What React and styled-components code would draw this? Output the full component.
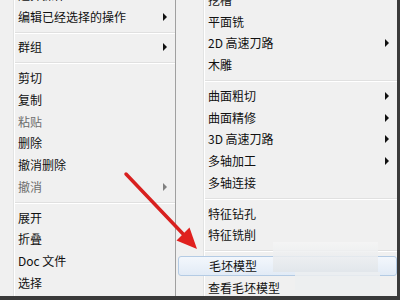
import styled, { createGlobalStyle } from "styled-components";

const GlobalStyle = createGlobalStyle`
  body {
    margin: 0;
    background: #3a3a3a;
    font-family: "Noto Sans CJK SC", "Noto Sans", sans-serif;
  }
`;

const leftItems = [
  { label: "选择操作", sub: true },
  { label: "编辑已经选择的操作", sub: true },
  { sep: true },
  { label: "群组", sub: true },
  { sep: true },
  { label: "剪切" },
  { label: "复制" },
  { label: "粘贴", disabled: true },
  { label: "删除" },
  { label: "撤消删除" },
  { label: "撤消", disabled: true, sub: true },
  { sep: true },
  { label: "展开" },
  { label: "折叠" },
  { label: "Doc 文件" },
  { label: "选择" },
];

const rightItems = [
  { label: "挖槽" },
  { label: "平面铣" },
  { label: "2D 高速刀路", sub: true },
  { label: "木雕" },
  { sep: true },
  { label: "曲面粗切", sub: true },
  { label: "曲面精修", sub: true },
  { label: "3D 高速刀路", sub: true },
  { label: "多轴加工", sub: true },
  { label: "多轴连接" },
  { sep: true },
  { label: "特征钻孔" },
  { label: "特征铣削" },
  { sep: true },
  { label: "毛坯模型", active: true },
  { label: "查看毛坯模型" },
];

function MenuList({ items }) {
  return items.map((it, i) =>
    it.sep ? (
      <Separator key={i} />
    ) : (
      <Item key={i} $disabled={it.disabled} $active={it.active}>
        <Label>{it.label}</Label>
        {it.sub && <SubArrow $disabled={it.disabled} />}
      </Item>
    )
  );
}

const App = () => {
  return (
    <>
      <GlobalStyle />
      <Screen>
        <LeftMenu>
          <MenuBody $offset={-16}>
            <MenuList items={leftItems} />
          </MenuBody>
        </LeftMenu>
        <RightMenu>
          <MenuBody $offset={-11}>
            <MenuList items={rightItems} />
          </MenuBody>
        </RightMenu>
        <BlurPatch $x={273} $y={242} $w={105} $h={30} $bg="linear-gradient(#f5f5f5, #e1e5e9)" />
        <BlurPatch $x={295} $y={272} $w={85} $h={18} $bg="#eceef0" />
        <Pointer width="400" height="300" viewBox="0 0 400 300">
          <line x1="126" y1="174" x2="185" y2="236" stroke="#d8201f" strokeWidth="3.5" strokeLinecap="round" />
          <polygon points="197,249 176.5,240.5 189.5,227.5" fill="#e0201e" />
        </Pointer>
      </Screen>
    </>
  );
};

export default App;

const Screen = styled.div`
  position: relative;
  display: flex;
  align-items: flex-start;
  width: 400px;
  height: 300px;
  overflow: hidden;
  background: #3a3a3a;
`;

// 왼쪽 27px 아이콘 칸 + 세로줄
const Menu = styled.div`
  height: 296px;
  overflow: hidden;
  background:
    linear-gradient(to right, transparent 27px, #e2e3e3 27px, #e2e3e3 28px, #ffffff 28px, #ffffff 29px, transparent 29px),
    #f0f0f0;
`;

const LeftMenu = styled(Menu)`
  flex: none;
  width: 189px;
  margin-left: -14px;
  border-right: 1px solid #a0a0a0;
`;

const RightMenu = styled(Menu)`
  flex: none;
  width: 221px;
`;

const MenuBody = styled.div`
  display: flex;
  flex-direction: column;
  margin-top: ${(p) => p.$offset}px;
`;

const Item = styled.div`
  display: flex;
  align-items: center;
  box-sizing: border-box;
  height: 21.75px;
  padding-left: 32px;
  padding-right: 8px;
  font-size: 12px;
  line-height: 14px;
  color: ${(p) => (p.$disabled ? "#6d6d6d" : "#111")};
  ${(p) =>
    p.$active &&
    `
    margin: 1px 0 1px 2px;
    height: 19.75px;
    padding-left: 30px;
    border: 1px solid #b4cbe4;
    border-radius: 3px;
    background: linear-gradient(#f3f7fc, #e2ebf6);
  `}
`;

const Label = styled.span`
  white-space: nowrap;
`;

const SubArrow = styled.span`
  margin-left: auto;
  width: 0;
  height: 0;
  border-top: 4px solid transparent;
  border-bottom: 4px solid transparent;
  border-left: 4px solid ${(p) => (p.$disabled ? "#808080" : "#111")};
`;

const Separator = styled.div`
  height: 9px;
  margin-left: 29px;
  background: linear-gradient(transparent 4px, #e0e0e0 4px, #e0e0e0 5px, #ffffff 5px, #ffffff 6px, transparent 6px);
`;

const BlurPatch = styled.div`
  position: absolute;
  left: ${(p) => p.$x}px;
  top: ${(p) => p.$y}px;
  width: ${(p) => p.$w}px;
  height: ${(p) => p.$h}px;
  background: ${(p) => p.$bg};
  opacity: 0.85;
`;

const Pointer = styled.svg`
  position: absolute;
  left: 0;
  top: 0;
  pointer-events: none;
`;
